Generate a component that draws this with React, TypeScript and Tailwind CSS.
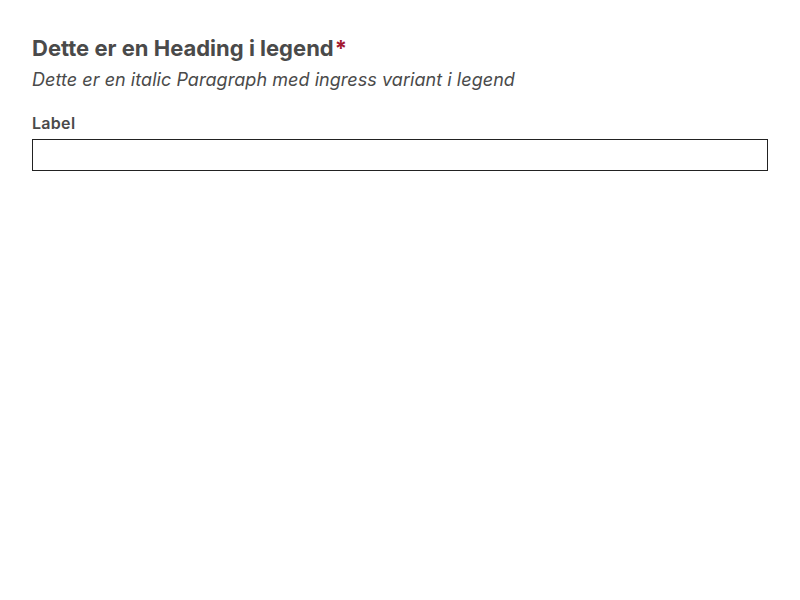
export default function App() {
  return (
    <div className="p-8 bg-white min-h-[600px]" style={{ fontFamily: "Inter, sans-serif" }}>
      <fieldset className="m-0 p-0 border-0">
        <legend className="p-0">
          <span className="block text-[22px] leading-[32px] font-bold text-[#4a4a4a]">
            Dette er en Heading i legend<span className="text-[#a3192f] ml-[1px]">*</span>
          </span>
          <span className="block text-[18px] leading-[32px] italic tracking-[0.05px] text-[#4a4a4a]">
            Dette er en italic Paragraph med ingress variant i legend
          </span>
        </legend>
        <label className="block mt-[15px] mb-[4px] text-[16px] leading-[24px] font-semibold tracking-[0.3px] text-[#4a4a4a]">
          Label
        </label>
        <input type="text" className="block w-full h-[32px] border border-[#222] bg-white" />
      </fieldset>
    </div>
  );
}
